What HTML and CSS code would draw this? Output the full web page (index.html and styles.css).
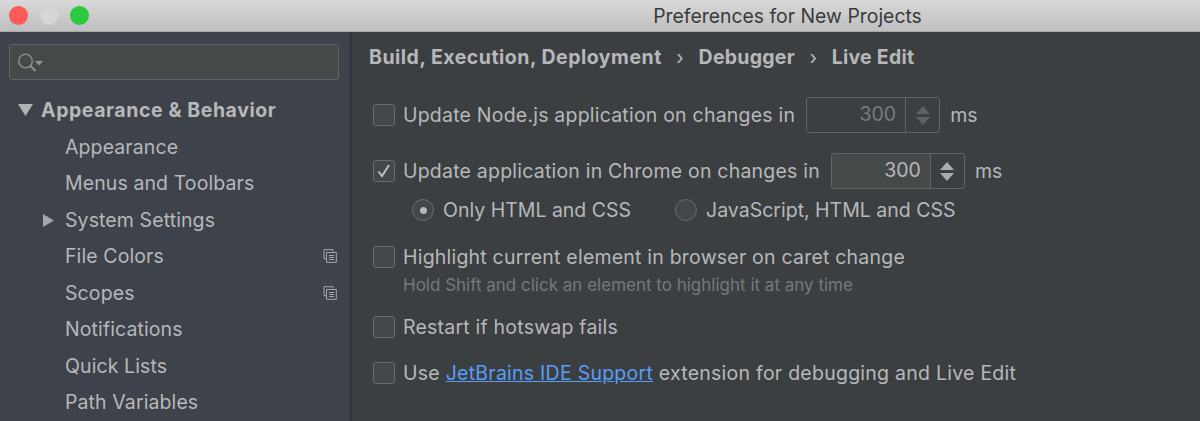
FILE: index.html
```html
<!DOCTYPE html>
<html lang="en">
<head>
  <meta charset="UTF-8">
  <title>Preferences for New Projects</title>
  <link rel="stylesheet" href="styles.css">
</head>
<body>

<header class="titlebar">
  <div class="lights">
    <span class="light red"></span>
    <span class="light grey"></span>
    <span class="light green"></span>
  </div>
  <div class="window-title">Preferences for New Projects</div>
</header>

<div class="window">
  <aside class="sidebar">
    <div class="search">
      <svg width="26" height="20" viewBox="0 0 26 20" fill="none">
        <circle cx="7.500" cy="8" r="6.800" stroke="#8f9296" stroke-width="1.300"/>
        <path d="M12.500 13L17.500 18" stroke="#8f9296" stroke-width="2"/>
        <path d="M17 8h8l-4 4.500z" fill="#8f9296"/>
      </svg>
    </div>
    <ul class="tree">
      <li class="tree-row group"><svg class="arrow-down" width="15" height="12" viewBox="0 0 15 12"><path d="M0 0h15L7.500 12z"/></svg>Appearance &amp; Behavior</li>
      <li class="tree-row">Appearance</li>
      <li class="tree-row">Menus and Toolbars</li>
      <li class="tree-row"><svg class="arrow-right" width="11" height="13" viewBox="0 0 11 13"><path d="M0 0l11 6.500L0 13z"/></svg>System Settings</li>
      <li class="tree-row">File Colors
        <svg class="copy-icon" width="14" height="14" viewBox="0 0 14 14" fill="none"><path d="M10 2.500V.7H1v9h2.500"/><path d="M3.500 3.500h9.800v9.800H3.500z"/><path d="M6 6.500h5M6 8.500h5M6 10.500h5"/></svg>
      </li>
      <li class="tree-row">Scopes
        <svg class="copy-icon" width="14" height="14" viewBox="0 0 14 14" fill="none"><path d="M10 2.500V.7H1v9h2.500"/><path d="M3.500 3.500h9.800v9.800H3.500z"/><path d="M6 6.500h5M6 8.500h5M6 10.500h5"/></svg>
      </li>
      <li class="tree-row">Notifications</li>
      <li class="tree-row">Quick Lists</li>
      <li class="tree-row">Path Variables</li>
    </ul>
  </aside>

  <main class="content">
    <div class="breadcrumb">
      <span class="crumb-long">Build, Execution, Deployment</span>
      <span class="sep">›</span>
      <span>Debugger</span>
      <span class="sep">›</span>
      <span>Live Edit</span>
    </div>

    <div class="option first">
      <span class="checkbox"></span>
      <span class="label">Update Node.js application on changes in</span>
      <div class="spinner disabled">
        <span class="spinner-value">300</span>
        <span class="spinner-arrows"><i class="up"></i><i class="down"></i></span>
      </div>
      <span>ms</span>
    </div>

    <div class="option second">
      <span class="checkbox">
        <svg width="16" height="16" viewBox="0 0 16 16" fill="none"><path d="M2.500 8.500l3.500 4.500 7-11" stroke="#bcbec0" stroke-width="2"/></svg>
      </span>
      <span class="label">Update application in Chrome on changes in</span>
      <div class="spinner">
        <span class="spinner-value">300</span>
        <span class="spinner-arrows"><i class="up"></i><i class="down"></i></span>
      </div>
      <span>ms</span>
    </div>

    <div class="radios">
      <span class="radio selected"></span>
      <span class="radio-label">Only HTML and CSS</span>
      <span class="radio"></span>
      <span>JavaScript, HTML and CSS</span>
    </div>

    <div class="option third">
      <span class="checkbox"></span>
      <span class="label">Highlight current element in browser on caret change</span>
    </div>
    <div class="hint">Hold Shift and click an element to highlight it at any time</div>

    <div class="option fourth">
      <span class="checkbox"></span>
      <span class="label">Restart if hotswap fails</span>
    </div>

    <div class="option fifth">
      <span class="checkbox"></span>
      <span class="label">Use <a href="#">JetBrains IDE Support</a> extension for debugging and Live Edit</span>
    </div>
  </main>
</div>

</body>
</html>
```

FILE: styles.css
```css
* {
  margin: 0;
  padding: 0;
  box-sizing: border-box;
}

html, body {
  height: 421px;
  overflow: hidden;
}

body {
  font-family: Inter, "Liberation Sans", sans-serif;
  font-size: 19.5px;
  color: #b6b8ba;
  background: #3c3f41;
}

.titlebar {
  height: 32px;
  background: linear-gradient(#d8d8d8, #bfbfbf);
  border-bottom: 1px solid #a9a9a9;
  display: flex;
  align-items: center;
}

.lights {
  display: flex;
  gap: 12px;
  padding-left: 9px;
}

.light {
  width: 19px;
  height: 19px;
  border-radius: 50%;
}

.red { background: #fc5b57; }
.grey { background: #d6d6d6; width: 18px; }
.green { background: #2ac940; }

.window-title {
  flex: 1;
  text-align: center;
  padding-left: 286px;
  color: #3a3a3a;
  font-size: 19.4px;
}

.window {
  display: flex;
  height: 389px;
}

.sidebar {
  width: 352px;
  background: #3e424b;
  border-right: 2px solid #33363a;
  padding: 12px 11px 0 9px;
}

.search {
  height: 36px;
  background: #45494a;
  border: 1px solid #646464;
  border-radius: 3px;
  padding: 8px 0 0 8px;
  display: flex;
}

.tree {
  list-style: none;
  margin-top: 12px;
}

.tree-row {
  height: 36.5px;
  padding-left: 56px;
  display: flex;
  align-items: center;
  position: relative;
  letter-spacing: 0.1px;
}

.group {
  padding-left: 32px;
  font-weight: 700;
  letter-spacing: 0.57px;
}

.arrow-down {
  position: absolute;
  left: 9px;
  top: 12px;
  fill: #b0b2b5;
}

.arrow-right {
  position: absolute;
  left: 34px;
  top: 12px;
  fill: #a4a6a9;
}

.copy-icon {
  position: absolute;
  right: 2px;
  top: 11px;
  stroke: #a4a8ad;
  stroke-width: 1;
}

.content {
  flex: 1;
  padding: 0 0 0 17px;
}

.breadcrumb {
  height: 50px;
  display: flex;
  align-items: center;
  gap: 14.500px;
  font-weight: 700;
  padding-bottom: 1px;
  letter-spacing: 0.25px;
}

.crumb-long {
  letter-spacing: 0.5px;
}

.sep {
  font-weight: 400;
}

.option {
  display: flex;
  align-items: center;
  margin-left: 4px;
  height: 34px;
}

.label {
  margin-left: 8px;
  letter-spacing: 0.21px;
}

.first { margin-top: 16px; }
.second { margin-top: 22px; }
.third { margin-top: 13px; }
.fourth { margin-top: 15px; }
.fifth { margin-top: 12px; }

.fifth .label {
  letter-spacing: 0.25px;
}

.checkbox {
  width: 22px;
  height: 22px;
  border: 1px solid #6b6b6b;
  border-radius: 3px;
  background: #43474a;
  display: flex;
  align-items: center;
  justify-content: center;
}

.spinner {
  width: 134px;
  height: 36px;
  margin: 0 10px 0 11px;
  display: flex;
  border: 1px solid #646464;
  border-radius: 3px;
  background: #45494a;
  color: #b6b8ba;
}

.spinner-value {
  flex: 1;
  text-align: right;
  line-height: 33px;
  padding-right: 9px;
}

.spinner-arrows {
  width: 34px;
  background: #3c3f41;
  border-left: 1px solid #646464;
  display: flex;
  flex-direction: column;
  align-items: center;
  justify-content: center;
  gap: 3px;
  border-radius: 0 3px 3px 0;
}

.spinner-arrows i {
  width: 0;
  height: 0;
  border-left: 7px solid transparent;
  border-right: 7px solid transparent;
}

.up { border-bottom: 8px solid #a9abad; }
.down { border-top: 8px solid #a9abad; }

.spinner.disabled {
  background: #3c3f41;
  color: #7a7c7e;
}

.spinner.disabled .up { border-bottom-color: #5f6163; }
.spinner.disabled .down { border-top-color: #5f6163; }

.radios {
  display: flex;
  align-items: center;
  height: 34px;
  margin: 5px 0 0 43px;
}

.radio {
  width: 22px;
  height: 22px;
  border: 1px solid #6b6b6b;
  border-radius: 50%;
  background: #43474a;
  margin-right: 9px;
  display: flex;
  align-items: center;
  justify-content: center;
}

.radio.selected::after {
  content: "";
  width: 7px;
  height: 7px;
  border-radius: 50%;
  background: #b6b8ba;
}

.radio-label {
  margin-right: 44px;
}

.hint {
  margin: 1px 0 0 34px;
  font-size: 17px;
  color: #76797c;
  height: 20px;
}

a {
  color: #589df6;
}
```
